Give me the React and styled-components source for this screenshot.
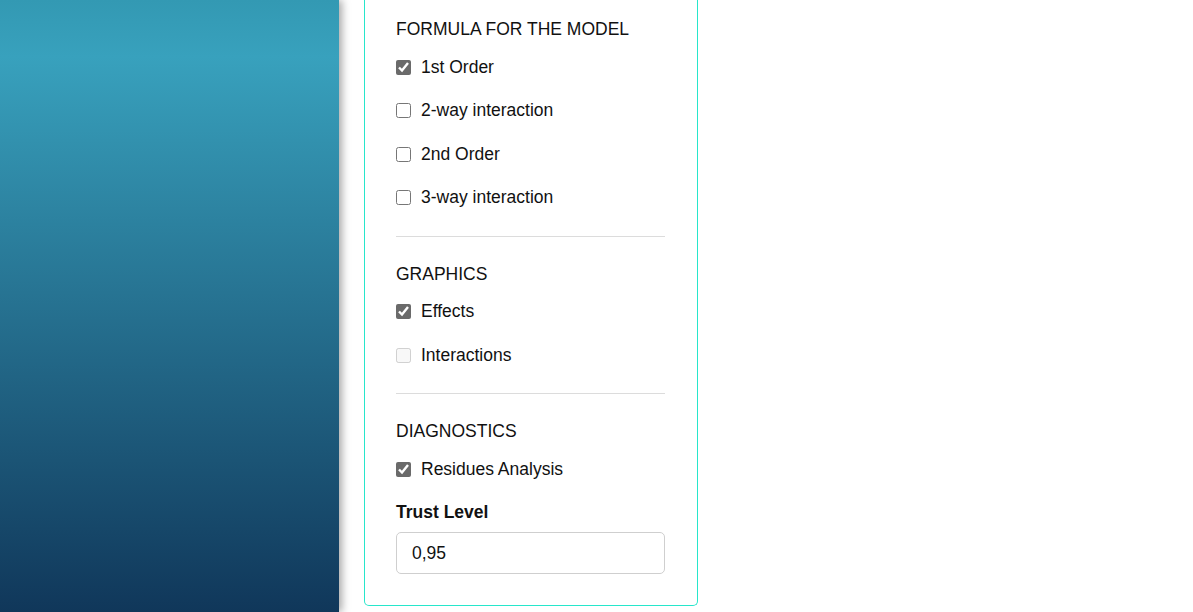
import { createGlobalStyle, styled } from "styled-components";

const GlobalStyle = createGlobalStyle`
    html, body {
        margin: 0;
        padding: 0;
        background: #fff;
    }
    body {
        font-family: "Liberation Sans", Arial, sans-serif;
        color: #111;
    }
`;

const Page = styled.div`
    display: flex;
    height: 612px;
    overflow: hidden;
`;

const Sidebar = styled.aside`
    flex: 0 0 339px;
    height: 100%;
    background: linear-gradient(to bottom, #3399b3 0px, #38a1bd 57px, #10375a 612px);
    box-shadow: 3px 0 8px rgba(0, 0, 0, 0.35);
    position: relative;
    z-index: 1;
`;

const Main = styled.main`
    flex: 1;
    padding-left: 25px;
`;

const Card = styled.section`
    width: 269px;
    padding: 19px 32px 31px 31px;
    border: 1px solid #27e6cb;
    border-top: none;
    border-radius: 0 0 5px 5px;
    background: #fff;
`;

const Heading = styled.h3`
    margin: 0 0 18px;
    font-size: 17.5px;
    line-height: 20px;
    font-weight: 400;
    text-transform: uppercase;
`;

const List = styled.div`
    display: flex;
    flex-direction: column;
    gap: 23.5px;
`;

const Row = styled.label`
    display: flex;
    align-items: center;
    height: 20px;
    font-size: 17.5px;
    color: #111;
`;

const Box = styled.input.attrs({ type: "checkbox" })`
    width: 15px;
    height: 15px;
    margin: 0 10px 0 0;
    accent-color: #6a6a6a;
`;

const Divider = styled.hr`
    border: none;
    border-top: 1px solid #dcdcdc;
    margin: 28px 0 27px;
`;

const FieldLabel = styled.div`
    margin-top: 23px;
    font-size: 17.5px;
    line-height: 20px;
    font-weight: 700;
`;

const Field = styled.input`
    box-sizing: border-box;
    display: block;
    width: 100%;
    height: 42px;
    margin-top: 10px;
    padding: 0 15px;
    border: 1px solid #cfcfcf;
    border-radius: 5px;
    font-family: "Liberation Sans", Arial, sans-serif;
    font-size: 17.5px;
    color: #111;
    outline: none;
`;

function Check({ label, checked, disabled }) {
    return (
        <Row>
            <Box defaultChecked={checked} disabled={disabled} />
            {label}
        </Row>
    );
}

export default function App() {
    return (
        <>
            <GlobalStyle />
            <Page>
                <Sidebar />
                <Main>
                    <Card>
                        <Heading>Formula for the model</Heading>
                        <List>
                            <Check label="1st Order" checked />
                            <Check label="2-way interaction" />
                            <Check label="2nd Order" />
                            <Check label="3-way interaction" />
                        </List>
                        <Divider />
                        <Heading>Graphics</Heading>
                        <List>
                            <Check label="Effects" checked />
                            <Check label="Interactions" disabled />
                        </List>
                        <Divider />
                        <Heading>Diagnostics</Heading>
                        <List>
                            <Check label="Residues Analysis" checked />
                        </List>
                        <FieldLabel>Trust Level</FieldLabel>
                        <Field defaultValue="0,95" />
                    </Card>
                </Main>
            </Page>
        </>
    );
}
